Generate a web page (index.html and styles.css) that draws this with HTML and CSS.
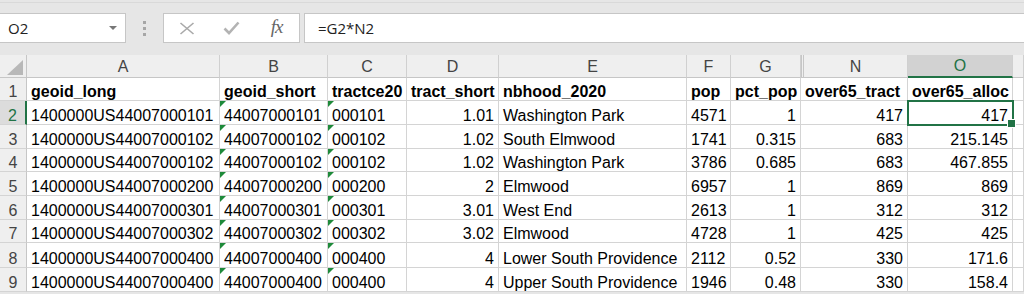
FILE: index.html
```html
<!DOCTYPE html>
<html lang="en">
<head>
    <meta charset="UTF-8">
    <title>over65 allocation</title>
    <link rel="stylesheet" href="styles.css">
</head>
<body>
    <div class="top-strip"></div>

    <div class="formula-bar">
        <div class="name-box">
            <span>O2</span>
            <span class="drop"></span>
        </div>
        <div class="grip">
            <span></span><span></span><span></span>
        </div>
        <div class="fn-box">
            <span class="fn-slot">
                <svg width="16" height="13" viewBox="0 0 16 13"><path d="M1.5 1 L14.5 12 M14.5 1 L1.5 12" stroke="#a9a9a9" stroke-width="1.6" fill="none"/></svg>
            </span>
            <span class="fn-slot">
                <svg width="17" height="14" viewBox="0 0 17 14"><path d="M1.5 7.5 L6 12 L15.5 1.5" stroke="#b3b3b3" stroke-width="2.6" fill="none"/></svg>
            </span>
            <span class="fn-slot fx">fx</span>
        </div>
        <div class="formula">=G2*N2</div>
    </div>

    <div class="sheet">
        <div class="row hdr-row">
            <div class="corner"><span></span></div>
            <div class="colhdr">A</div>
            <div class="colhdr">B</div>
            <div class="colhdr">C</div>
            <div class="colhdr">D</div>
            <div class="colhdr">E</div>
            <div class="colhdr">F</div>
            <div class="colhdr">G</div>
            <div class="colhdr hidden-before">N</div>
            <div class="colhdr sel">O</div>
            <div class="colhdr"></div>
        </div>

        <div class="row">
            <div class="rownum">1</div>
            <div class="cell b">geoid_long</div>
            <div class="cell b">geoid_short</div>
            <div class="cell b">tractce20</div>
            <div class="cell b">tract_short</div>
            <div class="cell b">nbhood_2020</div>
            <div class="cell b">pop</div>
            <div class="cell b">pct_pop</div>
            <div class="cell b">over65_tract</div>
            <div class="cell b">over65_alloc</div>
            <div class="cell"></div>
        </div>

        <div class="row">
            <div class="rownum sel">2</div>
            <div class="cell">1400000US44007000101</div>
            <div class="cell flag">44007000101</div>
            <div class="cell flag">000101</div>
            <div class="cell num">1.01</div>
            <div class="cell">Washington Park</div>
            <div class="cell">4571</div>
            <div class="cell num">1</div>
            <div class="cell num">417</div>
            <div class="cell num active">417</div>
            <div class="cell"></div>
        </div>

        <div class="row">
            <div class="rownum">3</div>
            <div class="cell">1400000US44007000102</div>
            <div class="cell flag">44007000102</div>
            <div class="cell flag">000102</div>
            <div class="cell num">1.02</div>
            <div class="cell">South Elmwood</div>
            <div class="cell">1741</div>
            <div class="cell num">0.315</div>
            <div class="cell num">683</div>
            <div class="cell num">215.145</div>
            <div class="cell"></div>
        </div>

        <div class="row">
            <div class="rownum">4</div>
            <div class="cell">1400000US44007000102</div>
            <div class="cell flag">44007000102</div>
            <div class="cell flag">000102</div>
            <div class="cell num">1.02</div>
            <div class="cell">Washington Park</div>
            <div class="cell">3786</div>
            <div class="cell num">0.685</div>
            <div class="cell num">683</div>
            <div class="cell num">467.855</div>
            <div class="cell"></div>
        </div>

        <div class="row">
            <div class="rownum">5</div>
            <div class="cell">1400000US44007000200</div>
            <div class="cell flag">44007000200</div>
            <div class="cell flag">000200</div>
            <div class="cell num">2</div>
            <div class="cell">Elmwood</div>
            <div class="cell">6957</div>
            <div class="cell num">1</div>
            <div class="cell num">869</div>
            <div class="cell num">869</div>
            <div class="cell"></div>
        </div>

        <div class="row">
            <div class="rownum">6</div>
            <div class="cell">1400000US44007000301</div>
            <div class="cell flag">44007000301</div>
            <div class="cell flag">000301</div>
            <div class="cell num">3.01</div>
            <div class="cell">West End</div>
            <div class="cell">2613</div>
            <div class="cell num">1</div>
            <div class="cell num">312</div>
            <div class="cell num">312</div>
            <div class="cell"></div>
        </div>

        <div class="row">
            <div class="rownum">7</div>
            <div class="cell">1400000US44007000302</div>
            <div class="cell flag">44007000302</div>
            <div class="cell flag">000302</div>
            <div class="cell num">3.02</div>
            <div class="cell">Elmwood</div>
            <div class="cell">4728</div>
            <div class="cell num">1</div>
            <div class="cell num">425</div>
            <div class="cell num">425</div>
            <div class="cell"></div>
        </div>

        <div class="row">
            <div class="rownum">8</div>
            <div class="cell">1400000US44007000400</div>
            <div class="cell flag">44007000400</div>
            <div class="cell flag">000400</div>
            <div class="cell num">4</div>
            <div class="cell">Lower South Providence</div>
            <div class="cell">2112</div>
            <div class="cell num">0.52</div>
            <div class="cell num">330</div>
            <div class="cell num">171.6</div>
            <div class="cell"></div>
        </div>

        <div class="row">
            <div class="rownum">9</div>
            <div class="cell">1400000US44007000400</div>
            <div class="cell flag">44007000400</div>
            <div class="cell flag">000400</div>
            <div class="cell num">4</div>
            <div class="cell">Upper South Providence</div>
            <div class="cell">1946</div>
            <div class="cell num">0.48</div>
            <div class="cell num">330</div>
            <div class="cell num">158.4</div>
            <div class="cell"></div>
        </div>
    </div>
</body>
</html>
```

FILE: styles.css
```css
* {
    box-sizing: border-box;
}
body {
    margin: 0;
    width: 1024px;
    height: 294px;
    overflow: hidden;
    background-color: #e6e6e6;
    font-family: "Liberation Sans", Arial, sans-serif;
}
.top-strip {
    height: 13px;
    border-top: 2px solid #e6e6e6;
    box-shadow: inset 0 1px 0 #d9d9d9;
}

/* formula bar */
.formula-bar {
    display: flex;
    align-items: stretch;
    height: 30px;
    margin-bottom: 12px;
    font-family: "Open Sans", "Liberation Sans", sans-serif;
    font-size: 15px;
    color: #222;
}
.name-box {
    width: 127px;
    margin-left: -1px;
    background: white;
    border: 1px solid #c6c6c6;
    display: flex;
    align-items: center;
    justify-content: space-between;
    padding: 0 8px 1px 8px;
}
.drop {
    width: 0;
    height: 0;
    border-left: 4px solid transparent;
    border-right: 4px solid transparent;
    border-top: 4px solid #777;
    margin-top: 1px;
}
.grip {
    width: 37px;
    display: flex;
    flex-direction: column;
    align-items: center;
    justify-content: center;
    gap: 3px;
}
.grip span {
    width: 3px;
    height: 3px;
    background: #a6a6a6;
}
.fn-box {
    width: 137px;
    background: white;
    border: 1px solid #c6c6c6;
    display: flex;
}
.fn-slot {
    width: 45px;
    display: flex;
    align-items: center;
    justify-content: center;
}
.fx {
    font-family: "Liberation Serif", serif;
    font-style: italic;
    font-size: 19px;
    color: #666;
    padding-bottom: 2px;
    letter-spacing: -1px;
}
.formula {
    flex: 1;
    margin-left: 4px;
    margin-right: -1px;
    background: white;
    border: 1px solid #c6c6c6;
    display: flex;
    align-items: center;
    padding: 0 0 1px 13px;
}

/* grid */
.sheet {
    display: grid;
    grid-template-rows: 23px 23px 24px 24px 23px 24px 24px 23px 25px 24px;
    background: white;
}
.row {
    display: grid;
    grid-template-columns: 27px 193px 108px 79px 92px 188px 44px 70px 107px 105px 11px;
}
.hdr-row {
    background: #efefef;
}
.corner {
    border-right: 1px solid #c6c6c6;
    border-bottom: 1px solid #c6c6c6;
    display: flex;
    align-items: flex-end;
    justify-content: flex-end;
    padding: 0 3px 2px 0;
}
.corner span {
    width: 16px;
    height: 15px;
    background: #b8b8b8;
    clip-path: polygon(100% 0, 100% 100%, 0 100%);
}
.colhdr {
    border-right: 1px solid #d0d0d0;
    border-bottom: 1px solid #c6c6c6;
    display: flex;
    align-items: center;
    justify-content: center;
    font-size: 16px;
    color: #444;
    padding-top: 1px;
}
.colhdr.hidden-before {
    border-left: 3px double #c6c6c6;
}
.colhdr.sel {
    background: #d2d2d2;
    color: #217346;
    border-bottom: 2px solid #217346;
}
.rownum {
    background: #efefef;
    border-right: 1px solid #c6c6c6;
    border-bottom: 1px solid #d4d4d4;
    display: flex;
    align-items: flex-end;
    justify-content: center;
    font-size: 16px;
    line-height: 16px;
    color: #444;
}
.rownum.sel {
    background: #dcdcdc;
    color: #217346;
    border-right: 2px solid #217346;
}
.cell {
    position: relative;
    border-right: 1px solid #d4d4d4;
    border-bottom: 1px solid #d4d4d4;
    display: flex;
    align-items: flex-end;
    padding: 0 4px;
    font-size: 16px;
    line-height: 16px;
    color: #000;
    white-space: nowrap;
    overflow: hidden;
}
.cell.b {
    font-weight: bold;
}
.cell.num {
    justify-content: flex-end;
}
.cell.flag::before {
    content: '';
    position: absolute;
    top: 0;
    left: 0;
    border-top: 6px solid #1e8a3a;
    border-right: 6px solid transparent;
}
.cell.active {
    overflow: visible;
}
.cell.active::after {
    content: '';
    position: absolute;
    left: -1px;
    top: -1px;
    right: -2px;
    bottom: -2px;
    border: 2px solid #217346;
    z-index: 2;
}
.cell.active::before {
    content: '';
    position: absolute;
    right: -4px;
    bottom: -4px;
    width: 7px;
    height: 7px;
    background: #217346;
    border: 1px solid white;
    z-index: 3;
}
```
